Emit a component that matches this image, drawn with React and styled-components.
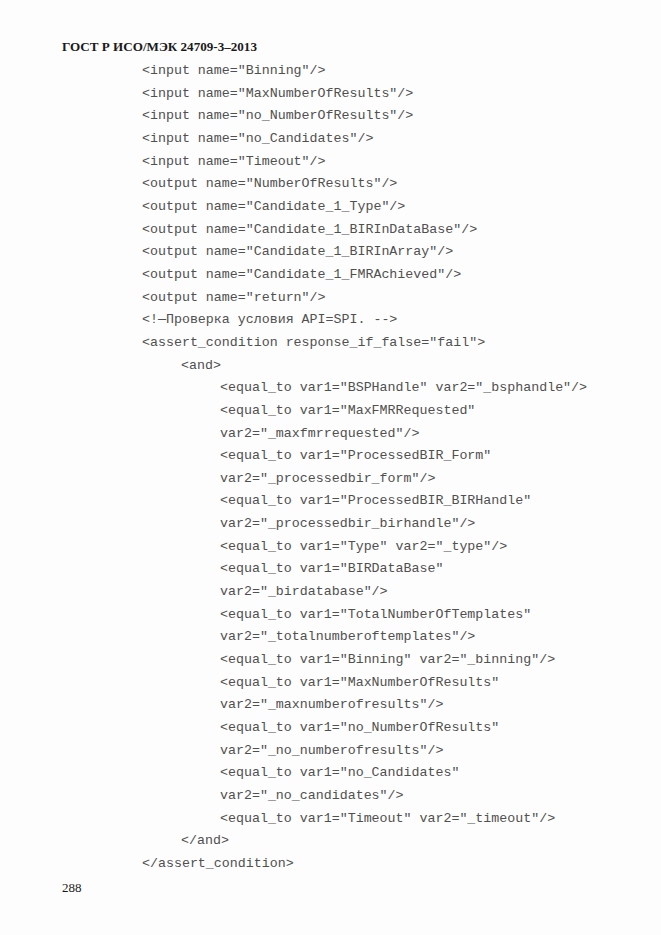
import React from 'react';
import styled, { createGlobalStyle } from 'styled-components';

const lines = [
  [0, '<input name="Binning"/>'],
  [0, '<input name="MaxNumberOfResults"/>'],
  [0, '<input name="no_NumberOfResults"/>'],
  [0, '<input name="no_Candidates"/>'],
  [0, '<input name="Timeout"/>'],
  [0, '<output name="NumberOfResults"/>'],
  [0, '<output name="Candidate_1_Type"/>'],
  [0, '<output name="Candidate_1_BIRInDataBase"/>'],
  [0, '<output name="Candidate_1_BIRInArray"/>'],
  [0, '<output name="Candidate_1_FMRAchieved"/>'],
  [0, '<output name="return"/>'],
  [0, '<!\u2014Проверка условия API=SPI. -->'],
  [0, '<assert_condition response_if_false="fail">'],
  [1, '<and>'],
  [2, '<equal_to var1="BSPHandle" var2="_bsphandle"/>'],
  [2, '<equal_to var1="MaxFMRRequested"'],
  [2, 'var2="_maxfmrrequested"/>'],
  [2, '<equal_to var1="ProcessedBIR_Form"'],
  [2, 'var2="_processedbir_form"/>'],
  [2, '<equal_to var1="ProcessedBIR_BIRHandle"'],
  [2, 'var2="_processedbir_birhandle"/>'],
  [2, '<equal_to var1="Type" var2="_type"/>'],
  [2, '<equal_to var1="BIRDataBase"'],
  [2, 'var2="_birdatabase"/>'],
  [2, '<equal_to var1="TotalNumberOfTemplates"'],
  [2, 'var2="_totalnumberoftemplates"/>'],
  [2, '<equal_to var1="Binning" var2="_binning"/>'],
  [2, '<equal_to var1="MaxNumberOfResults"'],
  [2, 'var2="_maxnumberofresults"/>'],
  [2, '<equal_to var1="no_NumberOfResults"'],
  [2, 'var2="_no_numberofresults"/>'],
  [2, '<equal_to var1="no_Candidates"'],
  [2, 'var2="_no_candidates"/>'],
  [2, '<equal_to var1="Timeout" var2="_timeout"/>'],
  [1, '</and>'],
  [0, '</assert_condition>'],
];

const App = () => {
  return (
    <>
      <GlobalStyle />
      <Page>
        <Header>ГОСТ Р ИСО/МЭК 24709-3–2013</Header>
        <Code>
          {lines.map(([level, text], i) => (
            <CodeLine level={level} key={i}>
              {text}
            </CodeLine>
          ))}
        </Code>
        <PageNumber>288</PageNumber>
      </Page>
    </>
  );
};

export default App;

const GlobalStyle = createGlobalStyle`
  body {
    margin: 0;
    background: #fdfdfd;
  }
`;

const Page = styled.div`
  width: 661px;
  height: 935px;
  box-sizing: border-box;
  padding: 37px 0 0 62px;
  display: flex;
  flex-direction: column;
`;

const Header = styled.div`
  font-family: 'Liberation Serif', serif;
  font-weight: bold;
  font-size: 13.1px;
  line-height: 20px;
  color: #1a1a1a;
`;

const Code = styled.div`
  margin-top: 3px;
  padding-left: 80px;
  display: flex;
  flex-direction: column;
`;

const CodeLine = styled.div`
  padding-left: ${(p) => p.level * 39}px;
  font-family: 'Liberation Mono', monospace;
  font-size: 13.3px;
  line-height: 22.66px;
  color: #505050;
  white-space: pre;
`;

const PageNumber = styled.div`
  margin-top: 2px;
  font-family: 'Liberation Serif', serif;
  font-size: 13px;
  line-height: 20px;
  color: #1a1a1a;
`;
